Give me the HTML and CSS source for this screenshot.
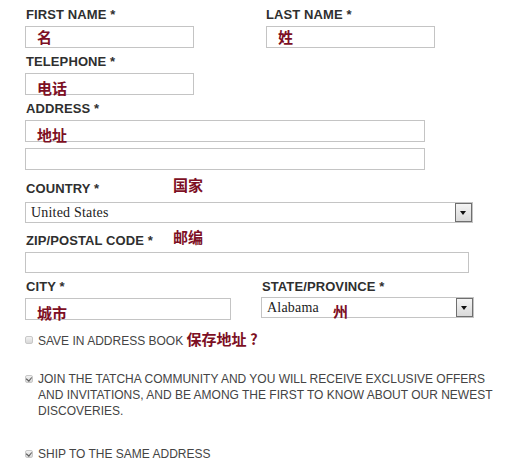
FILE: index.html
```html
<!DOCTYPE html>
<html lang="zh">
<head>
    <meta charset="UTF-8">
    <title>Address form</title>
    <link rel="stylesheet" href="styles.css">
</head>
<body>
    <form class="form">
        <div class="row">
            <div class="field w-first">
                <div class="label">FIRST NAME *</div>
                <div class="box h22"><span class="zh">名</span></div>
            </div>
            <div class="field w-last">
                <div class="label">LAST NAME *</div>
                <div class="box h22"><span class="zh">姓</span></div>
            </div>
        </div>

        <div class="field gap6">
            <div class="label">TELEPHONE *</div>
            <div class="box h22 w-tel"><span class="zh low">电话</span></div>
        </div>

        <div class="field gap6">
            <div class="label">ADDRESS *</div>
            <div class="box h22 w-addr"><span class="zh low">地址</span></div>
            <div class="box h22 w-addr second"></div>
        </div>

        <div class="field gap11">
            <div class="label"><span class="label-text">COUNTRY *</span><span class="zh">国家</span></div>
            <div class="select w-country">
                <span class="select-value">United States</span>
                <span class="arrow"></span>
            </div>
        </div>

        <div class="field gap10">
            <div class="label"><span class="label-text">ZIP/POSTAL CODE *</span><span class="zh">邮编</span></div>
            <div class="box h20 w-zip"></div>
        </div>

        <div class="row gap6">
            <div class="field w-city">
                <div class="label">CITY *</div>
                <div class="box h22"><span class="zh low">城市</span></div>
            </div>
            <div class="field w-state">
                <div class="label">STATE/PROVINCE *</div>
                <div class="select state">
                    <span class="select-value">Alabama</span>
                    <span class="zh state-zh">州</span>
                    <span class="arrow"></span>
                </div>
            </div>
        </div>

        <div class="check save">
            <span class="cb"></span>
            <span class="check-text">SAVE IN ADDRESS BOOK <span class="zh">保存地址 ?</span></span>
        </div>

        <div class="check join">
            <span class="cb on"></span>
            <span class="check-text">JOIN THE TATCHA COMMUNITY AND YOU WILL RECEIVE EXCLUSIVE OFFERS AND INVITATIONS, AND BE AMONG THE FIRST TO KNOW ABOUT OUR NEWEST DISCOVERIES.</span>
        </div>

        <div class="check ship">
            <span class="cb on"></span>
            <span class="check-text">SHIP TO THE SAME ADDRESS</span>
        </div>
    </form>
</body>
</html>
```

FILE: styles.css
```css
body {
    margin: 0;
    background: #fff;
    font-family: 'Liberation Sans', Arial, sans-serif;
    color: #333;
}

.form {
    padding: 7px 0 0 25px;
}

.row {
    display: flex;
}

.field {
    display: flex;
    flex-direction: column;
}

.gap6 {
    margin-top: 6px;
}

.gap10 {
    margin-top: 10px;
}

.gap11 {
    margin-top: 11px;
}

.label {
    font-size: 13px;
    font-weight: 700;
    line-height: 15px;
    height: 15px;
    margin-left: 1px;
    margin-bottom: 4px;
    display: flex;
    align-items: center;
    color: #2f2f2f;
    letter-spacing: 0.1px;
}

.label-text {
    width: 147px;
}

.label .zh {
    margin-top: -7px;
}

.zh {
    font-family: 'Noto Sans CJK SC', sans-serif;
    font-weight: 700;
    font-size: 15px;
    color: #7d0f24;
    line-height: 18px;
}

.box {
    box-sizing: border-box;
    border: 1px solid #c4c4c4;
    background: #fff;
    padding-left: 11px;
    display: flex;
    align-items: flex-start;
}

.box .zh {
    margin-top: 1px;
}

.box .zh.low {
    margin-top: 5px;
}

.h22 {
    height: 22px;
}

.h20 {
    height: 21px;
}

.w-first {
    width: 241px;
}

.w-first .box {
    width: 169px;
}

.w-last .label {
    margin-left: 0;
}

.w-last .box {
    width: 169px;
}

.w-tel {
    width: 169px;
}

.w-addr {
    width: 400px;
}

.second {
    margin-top: 6px;
}

.w-zip {
    width: 444px;
}

.w-city {
    width: 236px;
}

.w-city .box {
    width: 206px;
}

.select {
    box-sizing: border-box;
    height: 21px;
    border: 1px solid #c4c4c4;
    background: #fff;
    display: flex;
    align-items: center;
    position: relative;
    font-family: 'Liberation Serif', 'Times New Roman', serif;
    font-size: 14px;
    letter-spacing: 0.2px;
    color: #222;
    padding-left: 5px;
}

.w-country {
    width: 448px;
    margin-top: 2px;
}

.state {
    width: 213px;
    margin-top: -1px;
}

.state-zh {
    margin-left: 14px;
    margin-top: 7px;
}

.arrow {
    position: absolute;
    right: 0;
    top: 0;
    width: 15px;
    height: 17px;
    border: 1px solid #6f6f6f;
    background: linear-gradient(#f4f4f4, #d9d9d9);
}

.arrow::after {
    content: "";
    position: absolute;
    left: 4px;
    top: 7px;
    border-left: 3.5px solid transparent;
    border-right: 3.5px solid transparent;
    border-top: 4px solid #111;
}

.check {
    display: flex;
    align-items: flex-start;
    font-size: 12px;
    line-height: 16px;
    color: #444;
}

.check-text {
    width: 462px;
}

.check-text .zh {
    line-height: 14px;
}

.save {
    margin-top: 12px;
}

.join {
    margin-top: 22px;
}

.ship {
    margin-top: 27px;
}

.cb {
    box-sizing: border-box;
    flex: none;
    width: 8px;
    height: 8px;
    margin: 4px 5px 0 0;
    border: 1px solid #c8c8c8;
    border-radius: 2px;
    background: linear-gradient(#f2f2f2, #d8d8d8);
    position: relative;
}

.cb.on::after {
    content: "";
    position: absolute;
    left: 1px;
    top: 0;
    width: 3px;
    height: 4px;
    border-right: 1.5px solid #555;
    border-bottom: 1.5px solid #555;
    transform: rotate(40deg);
}
```
